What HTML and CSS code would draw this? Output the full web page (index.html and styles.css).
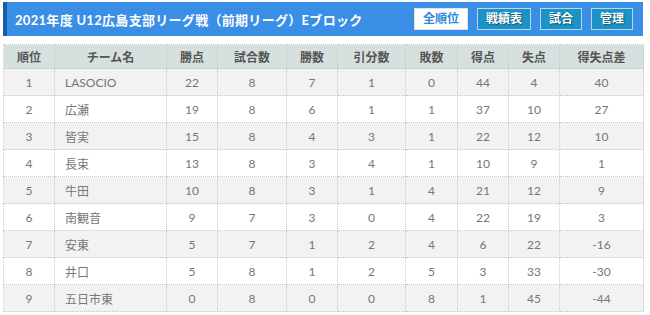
FILE: index.html
```html
<!DOCTYPE html>
<html lang="ja">
<head>
<meta charset="utf-8">
<link rel="stylesheet" href="styles.css">
</head>
<body>
<div class="page">
  <div class="head">
    <h1 class="title">2021年度 U12広島支部リーグ戦（前期リーグ）Eブロック</h1>
    <div class="btns">
      <span class="btn active">全順位</span>
      <span class="btn">戦績表</span>
      <span class="btn">試合</span>
      <span class="btn">管理</span>
    </div>
  </div>
  <table class="standings">
    <colgroup>
      <col style="width:51px"><col style="width:112px"><col style="width:51px"><col style="width:69px"><col style="width:51px"><col style="width:68px"><col style="width:52px"><col style="width:51px"><col style="width:51px"><col style="width:84px">
    </colgroup>
    <thead>
      <tr><th>順位</th><th>チーム名</th><th>勝点</th><th>試合数</th><th>勝数</th><th>引分数</th><th>敗数</th><th>得点</th><th>失点</th><th>得失点差</th></tr>
    </thead>
    <tbody>
      <tr><td>1</td><td class="name">LASOCIO</td><td>22</td><td>8</td><td>7</td><td>1</td><td>0</td><td>44</td><td>4</td><td>40</td></tr>
      <tr><td>2</td><td class="name">広瀬</td><td>19</td><td>8</td><td>6</td><td>1</td><td>1</td><td>37</td><td>10</td><td>27</td></tr>
      <tr><td>3</td><td class="name">皆実</td><td>15</td><td>8</td><td>4</td><td>3</td><td>1</td><td>22</td><td>12</td><td>10</td></tr>
      <tr><td>4</td><td class="name">長束</td><td>13</td><td>8</td><td>3</td><td>4</td><td>1</td><td>10</td><td>9</td><td>1</td></tr>
      <tr><td>5</td><td class="name">牛田</td><td>10</td><td>8</td><td>3</td><td>1</td><td>4</td><td>21</td><td>12</td><td>9</td></tr>
      <tr><td>6</td><td class="name">南観音</td><td>9</td><td>7</td><td>3</td><td>0</td><td>4</td><td>22</td><td>19</td><td>3</td></tr>
      <tr><td>7</td><td class="name">安東</td><td>5</td><td>7</td><td>1</td><td>2</td><td>4</td><td>6</td><td>22</td><td>-16</td></tr>
      <tr><td>8</td><td class="name">井口</td><td>5</td><td>8</td><td>1</td><td>2</td><td>5</td><td>3</td><td>33</td><td>-30</td></tr>
      <tr><td>9</td><td class="name">五日市東</td><td>0</td><td>8</td><td>0</td><td>0</td><td>8</td><td>1</td><td>45</td><td>-44</td></tr>
    </tbody>
  </table>
</div>
</body>
</html>
```

FILE: styles.css
```css
html, body {
  margin: 0;
  padding: 0;
  background: #fff;
}
body {
  font-family: Lato, "Noto Sans CJK JP", sans-serif;
}
.page {
  padding: 2px 7px 0 3px;
}
.head {
  display: flex;
  align-items: center;
  justify-content: space-between;
  height: 34px;
  background: #3a8ee6;
  border-left: 4px solid #1a5ea8;
  padding: 0 10px 0 8px;
  box-sizing: border-box;
}
.title {
  margin: 0;
  font-size: 13px;
  font-weight: bold;
  color: #fff;
  letter-spacing: 0.3px;
}
.btns {
  display: flex;
  gap: 9px;
}
.btn {
  display: inline-block;
  height: 22px;
  line-height: 20px;
  box-sizing: border-box;
  padding: 0 8px;
  font-size: 12px;
  font-weight: bold;
  color: #fff;
  background: #1b93c6;
  border: 1px solid #b6d8ee;
  text-shadow: 1px 1px 1px rgba(0,0,0,0.45);
}
.btn.active {
  background: #fff;
  color: #2a8ad8;
  border-color: #e0e0e0;
  text-shadow: none;
  padding: 0 8px;
}
.standings {
  margin-top: 8px;
  width: 640px;
  border-collapse: collapse;
  table-layout: fixed;
  font-size: 12px;
  color: #777;
}
.standings th {
  height: 23px;
  background: #d5e0df;
  color: #555;
  font-weight: bold;
  font-size: 12px;
  border: 1px dotted #c8c8c8;
  padding: 0;
}
.standings td {
  height: 26px;
  text-align: center;
  border: 1px dotted #c8c8c8;
  padding: 0;
}
.standings td.name {
  text-align: left;
  padding-left: 10px;
}
.standings tbody tr:nth-child(odd) td {
  background: #f2f2f2;
}
.standings tbody tr:nth-child(even) td {
  background: #fff;
}
```
